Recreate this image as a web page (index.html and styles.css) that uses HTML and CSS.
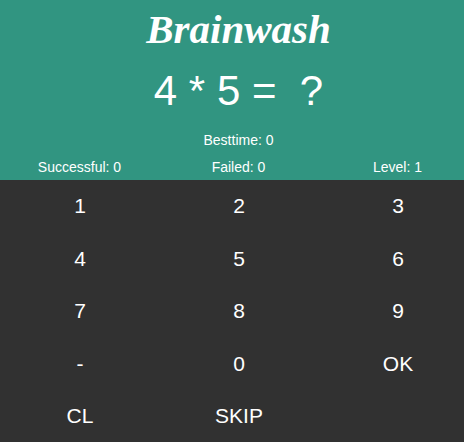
FILE: index.html
```html
<!DOCTYPE html>
<html>
  <head>
    <meta charset="utf-8" />
    <link rel="stylesheet" href="styles.css">
  </head>

  <body>
    <div class="app">
      <header class="top">
        <h1 class="title">Brainwash</h1>
        <div class="task">4 * 5 = &nbsp;?</div>
        <div class="best">Besttime: 0</div>
        <div class="stats">
          <span>Successful: 0</span>
          <span>Failed: 0</span>
          <span>Level: 1</span>
        </div>
      </header>

      <div class="keys">
        <div class="key">1</div>
        <div class="key">2</div>
        <div class="key">3</div>
        <div class="key">4</div>
        <div class="key">5</div>
        <div class="key">6</div>
        <div class="key">7</div>
        <div class="key">8</div>
        <div class="key">9</div>
        <div class="key">-</div>
        <div class="key">0</div>
        <div class="key">OK</div>
        <div class="key">CL</div>
        <div class="key">SKIP</div>
      </div>
    </div>
  </body>
</html>
```

FILE: styles.css
```css
html,
body {
  margin: 0;
  height: 100%;
  overflow: hidden;
  background-color: #313131;
}

.app {
  width: 477px;
  font-family: "Liberation Sans", Arial, sans-serif;
  color: #fff;
}

.top {
  height: 180px;
  background-color: #319581;
  text-align: center;
}

.title {
  margin: 0;
  padding-top: 5px;
  height: 62px;
  font-family: "Liberation Serif", serif;
  font-size: 41px;
  font-style: italic;
  font-weight: bold;
  line-height: 48px;
}

.task {
  font-size: 42px;
  line-height: 48px;
  height: 50px;
}

.best {
  margin-top: 15px;
  font-size: 14px;
  line-height: 16px;
}

.stats {
  display: grid;
  grid-template-columns: repeat(3, 159px);
  margin-top: 11px;
  font-size: 14px;
  line-height: 16px;
}

.keys {
  display: grid;
  grid-template-columns: repeat(3, 159px);
  grid-auto-rows: 52.5px;
  padding-left: 0.5px;
  text-align: center;
  font-size: 21px;
}

.key {
  display: flex;
  align-items: center;
  justify-content: center;
}
```
